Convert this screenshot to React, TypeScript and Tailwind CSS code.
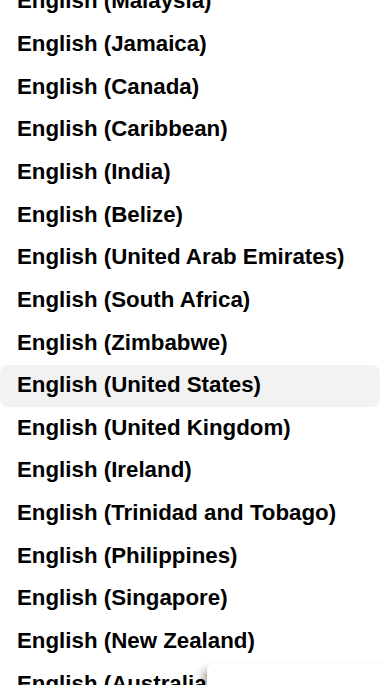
const languages = [
  'English (Malaysia)',
  'English (Jamaica)',
  'English (Canada)',
  'English (Caribbean)',
  'English (India)',
  'English (Belize)',
  'English (United Arab Emirates)',
  'English (South Africa)',
  'English (Zimbabwe)',
  'English (United States)',
  'English (United Kingdom)',
  'English (Ireland)',
  'English (Trinidad and Tobago)',
  'English (Philippines)',
  'English (Singapore)',
  'English (New Zealand)',
  'English (Australia)',
];

const selected = 'English (United States)';

export default function App() {
  return (
    <div className="relative w-[384px] h-[685px] overflow-hidden bg-white font-['Liberation_Sans',Arial,sans-serif]">
      <ul className="mt-[-19.2px] w-[380px]">
        {languages.map((lang) => (
          <li
            key={lang}
            className={
              lang === selected
                ? 'h-[42.65px] flex items-center pl-[17px] pb-[2px] rounded-lg bg-[#f2f2f2] text-[22.3px] font-bold text-black'
                : 'h-[42.65px] flex items-center pl-[17px] pb-[2px] text-[22.3px] font-bold text-black'
            }
          >
            {lang}
          </li>
        ))}
      </ul>
      {/* popup edge overlapping the last row */}
      <div className="absolute left-[207px] top-[664px] w-[200px] h-[40px] rounded-tl-md bg-white shadow-[-6px_4px_8px_-2px_rgba(0,0,0,0.35)]" />
    </div>
  );
}
